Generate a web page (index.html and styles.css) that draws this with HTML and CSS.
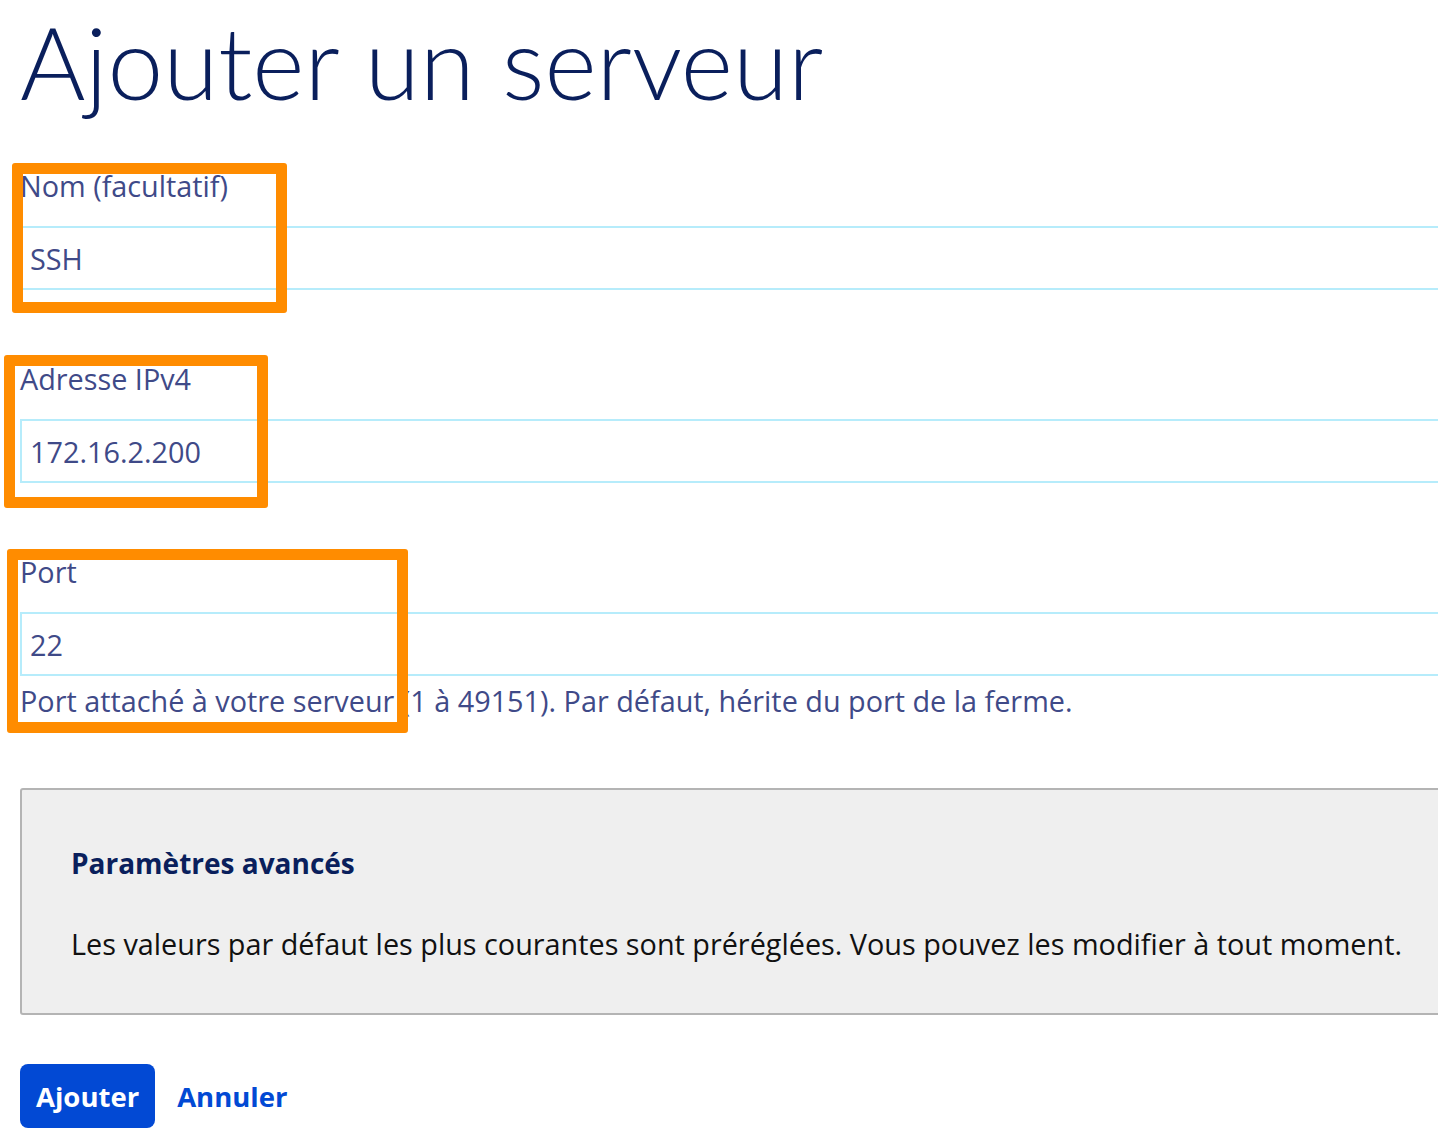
FILE: index.html
```html
<!DOCTYPE html>
<html lang="fr">
<head>
<meta charset="utf-8">
<title>Ajouter un serveur</title>
<link rel="stylesheet" href="styles.css">
</head>
<body>
<main class="page">
  <h1 class="title">Ajouter un serveur</h1>
  <form class="form">
    <div class="field">
      <label class="label" for="nom">Nom (facultatif)</label>
      <input class="input" id="nom" type="text" value="SSH">
    </div>
    <div class="field">
      <label class="label" for="ip">Adresse IPv4</label>
      <input class="input" id="ip" type="text" value="172.16.2.200">
    </div>
    <div class="field">
      <label class="label" for="port">Port</label>
      <input class="input" id="port" type="text" value="22">
      <p class="help">Port attaché à votre serveur (1 à 49151). Par défaut, hérite du port de la ferme.</p>
    </div>
    <section class="advanced">
      <h2 class="advanced-title">Paramètres avancés</h2>
      <p class="advanced-text">Les valeurs par défaut les plus courantes sont préréglées. Vous pouvez les modifier à tout moment.</p>
    </section>
    <div class="actions">
      <button class="btn-primary" type="button">Ajouter</button>
      <a class="link" href="#">Annuler</a>
    </div>
  </form>
  <div class="mark mark-1"></div>
  <div class="mark mark-2"></div>
  <div class="mark mark-3"></div>
</main>
</body>
</html>
```
FILE: styles.css
```css
html, body {
  margin: 0;
  padding: 0;
  overflow: hidden;
  background: #ffffff;
}
body {
  font-family: "Open Sans", "Liberation Sans", sans-serif;
}
.page {
  position: relative;
  width: 1500px;
  padding: 0 0 0 20px;
}
.title {
  margin: 0;
  padding-top: 6px;
  font-family: "Lato", "Open Sans", sans-serif;
  font-size: 100px;
  font-weight: 300;
  line-height: 1.1;
  color: #0a1f5c;
  height: 160px;
  white-space: nowrap;
}
.form {
  display: flex;
  flex-direction: column;
}
.field {
  display: flex;
  flex-direction: column;
  margin-bottom: 69px;
}
.label {
  font-size: 28.8px;
  line-height: 40px;
  color: #3f4a88;
  margin-bottom: 20px;
}
.input {
  box-sizing: border-box;
  height: 64px;
  width: 100%;
  margin: 0;
  padding: 0 8px;
  border: 2px solid #b6ecfb;
  border-radius: 0;
  font-family: inherit;
  font-size: 28.8px;
  color: #3f4a88;
  background: #fff;
  outline: none;
}
.field:nth-child(3) {
  margin-bottom: 67px;
}
.help {
  margin: 5px 0 0 0;
  font-size: 28.8px;
  line-height: 40px;
  color: #3f4a88;
}
.advanced {
  background: #efefef;
  border: 2px solid #b4b4b4;
  border-radius: 3px;
  padding: 53px 49px 49px 49px;
  margin-bottom: 49px;
}
.advanced-title {
  margin: 0 0 41px 0;
  font-size: 28px;
  line-height: 40px;
  font-weight: 700;
  color: #0a1f5c;
}
.advanced-text {
  margin: 0;
  font-size: 28.8px;
  line-height: 40px;
  color: #111111;
}
.actions {
  display: flex;
  align-items: center;
  gap: 22px;
}
.btn-primary {
  height: 64px;
  padding: 0 16px;
  border: none;
  border-radius: 8px;
  background: #0249d4;
  color: #ffffff;
  font-family: inherit;
  font-size: 27.5px;
  font-weight: 700;
}
.link {
  font-size: 27.5px;
  font-weight: 700;
  color: #0249d4;
  text-decoration: none;
}
.mark {
  position: absolute;
  box-sizing: border-box;
  border: 11px solid #ff8c00;
  border-radius: 3px;
}
.mark-1 { left: 12px; top: 163px; width: 275px; height: 150px; }
.mark-2 { left: 4px; top: 355px; width: 264px; height: 153px; }
.mark-3 { left: 7px; top: 549px; width: 401px; height: 184px; }
```
